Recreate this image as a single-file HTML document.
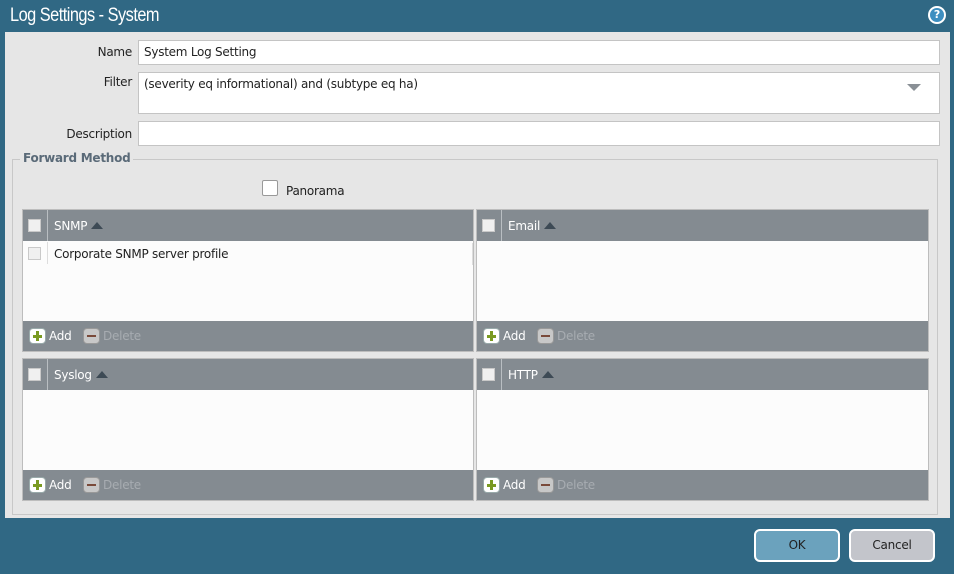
<!DOCTYPE html>
<html><head><style>
*{box-sizing:border-box;margin:0;padding:0}
body{width:954px;height:574px;background:#306884;font-family:"DejaVu Sans","Liberation Sans",sans-serif;font-size:12px;letter-spacing:-0.25px;color:#222;position:relative;overflow:hidden}
.a{position:absolute}
.title{left:10px;top:5px;color:#fff;font-family:"Liberation Sans",sans-serif;font-size:19px;letter-spacing:-0.6px;transform:scaleX(0.86);transform-origin:0 0;white-space:nowrap}
.help{left:928px;top:6px;width:18px;height:18px;border-radius:50%;background:#fff;}
.help i{position:absolute;left:2px;top:2px;width:14px;height:14px;border-radius:50%;background:#3d8ec0;color:#fff;font-style:normal;font-weight:bold;font-size:11px;text-align:center;line-height:14px}
.panel{left:5px;top:32px;width:945px;height:486px;background:#e6e6e6}
.lbl{text-align:right;width:120px;left:12px}
.inp{background:#fff;border:1px solid #c4c4c4;left:138px;width:802px;padding:4px 5px}
.fs{left:12px;top:159px;width:926px;height:356px;border:1px solid #c8c8c8}
.leg{left:20px;top:151px;background:#e6e6e6;padding:0 3px;color:#5a6a78;font-weight:bold;font-size:12px}
.grid{background:#fcfcfc;border:1px solid #bdbdbd}
.hd{position:absolute;left:0;right:0;top:0;height:31px;background:#848b91;color:#fff}
.ft{position:absolute;left:0;right:0;bottom:0;height:30px;background:#848b91;color:#fff}
.cb{position:absolute;width:13px;height:13px;background:#f0f0f0;border:1px solid #c9c9c9}
.sep{position:absolute;left:24px;top:0;width:1px;height:31px;background:#b9bec2}
.hd span{position:absolute;left:31px;top:9px}
.tri{display:inline-block;width:0;height:0;border-left:6px solid transparent;border-right:6px solid transparent;border-bottom:7px solid #3d4a55;margin-left:4px;vertical-align:1px}
.add{position:absolute;left:6px;top:7px;width:17px;height:16px;border-radius:4px;background:#fff;border:1px solid #9aa}
.add:before{content:"";position:absolute;left:3px;top:6px;width:9px;height:3px;background:#7a9a22}
.add:after{content:"";position:absolute;left:6px;top:2px;width:3px;height:10px;background:#7a9a22}
.del{position:absolute;left:60px;top:7px;width:17px;height:16px;border-radius:4px;background:#c8c8c8;border:1px solid #999}
.del:before{content:"";position:absolute;left:3px;top:6px;width:9px;height:2px;background:#7a4a3a}
.ft .t1{position:absolute;left:26px;top:8px}
.ft .t2{position:absolute;left:80px;top:8px;color:#a7acb1}
.btn{top:529px;width:86px;height:33px;border:2px solid #fff;border-radius:6px;text-align:center;line-height:29px;color:#222}
</style></head><body>
<div class="a title">Log Settings - System</div>
<div class="a help"><i>?</i></div>
<div class="a panel"></div>
<div class="a lbl" style="top:45px">Name</div>
<div class="a inp" style="top:40px;height:25px">System Log Setting</div>
<div class="a lbl" style="top:75px">Filter</div>
<div class="a inp" style="top:72px;height:42px">(severity eq informational) and (subtype eq ha)</div>
<div class="a" style="left:907px;top:84px;border-left:7px solid transparent;border-right:7px solid transparent;border-top:7px solid #8a9096"></div>
<div class="a lbl" style="top:127px">Description</div>
<div class="a inp" style="top:121px;height:25px"></div>
<div class="a fs"></div>
<div class="a leg">Forward Method</div>
<div class="a" style="left:262px;top:180px;width:16px;height:16px;background:#fff;border:1px solid #999;border-radius:2px"></div>
<div class="a" style="left:286px;top:184px">Panorama</div>

<div class="a grid" style="left:22px;top:209px;width:452px;height:143px">
 <div class="hd"><div class="cb" style="left:5px;top:9px"></div><div class="sep"></div><span>SNMP<i class="tri"></i></span></div>
 <div class="cb" style="left:5px;top:37px"></div><div style="position:absolute;left:24px;top:32px;width:1px;height:22px;background:#ddd"></div>
 <div style="position:absolute;left:31px;top:37px">Corporate SNMP server profile</div>
 <div style="position:absolute;left:449px;top:33px;width:1px;height:22px;background:#ddd"></div>
 <div class="ft"><div class="add"></div><span class="t1">Add</span><div class="del"></div><span class="t2">Delete</span></div>
</div>
<div class="a grid" style="left:476px;top:209px;width:453px;height:143px">
 <div class="hd"><div class="cb" style="left:5px;top:9px"></div><div class="sep"></div><span>Email<i class="tri"></i></span></div>
 <div class="ft"><div class="add"></div><span class="t1">Add</span><div class="del"></div><span class="t2">Delete</span></div>
</div>
<div class="a grid" style="left:22px;top:358px;width:452px;height:143px">
 <div class="hd"><div class="cb" style="left:5px;top:9px"></div><div class="sep"></div><span>Syslog<i class="tri"></i></span></div>
 <div class="ft"><div class="add"></div><span class="t1">Add</span><div class="del"></div><span class="t2">Delete</span></div>
</div>
<div class="a grid" style="left:476px;top:358px;width:453px;height:143px">
 <div class="hd"><div class="cb" style="left:5px;top:9px"></div><div class="sep"></div><span>HTTP<i class="tri"></i></span></div>
 <div class="ft"><div class="add"></div><span class="t1">Add</span><div class="del"></div><span class="t2">Delete</span></div>
</div>

<div class="a btn" style="left:754px;background:#6ba2bd">OK</div>
<div class="a btn" style="left:849px;background:#c3c5cb">Cancel</div>
</body></html>
